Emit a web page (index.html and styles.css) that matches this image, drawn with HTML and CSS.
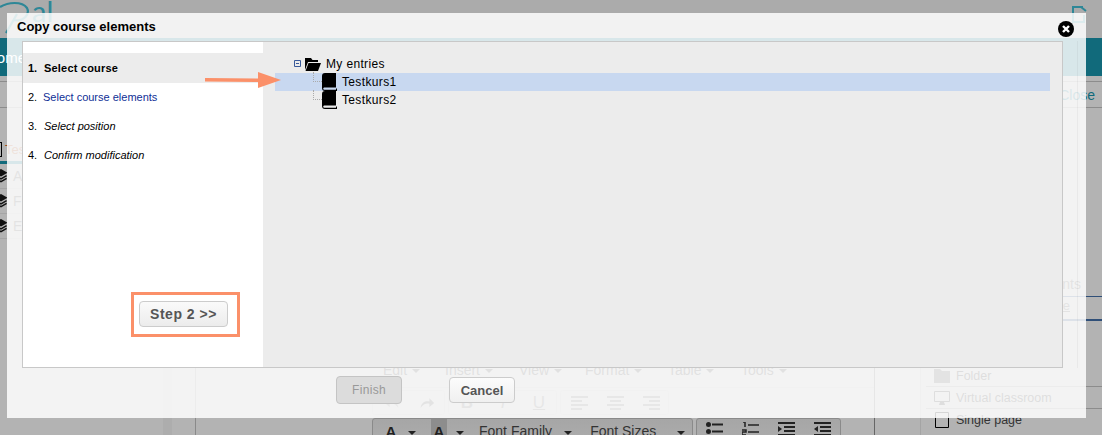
FILE: index.html
```html
<!DOCTYPE html>
<html lang="en">
<head>
<meta charset="utf-8">
<title>Copy course elements</title>
<link rel="stylesheet" href="styles.css">
</head>
<body>
<svg class="defs" width="0" height="0">
  <symbol id="stack" viewBox="0 0 14 16"><path d="M7 0 L14 4 L7 8 L0 4Z" fill="#111"/><path d="M1 7 L7 10.500 L13 7 M1 10 L7 13.500 L13 10" fill="none" stroke="#111" stroke-width="1.600"/></symbol>
  <symbol id="book" viewBox="0 0 15 18"><path d="M3 0 H14 V14.500 H3 C1.800 14.500 1.200 15 1.200 15.700 C1.200 16.400 1.800 16.800 3 16.800 H14 V15.500 H15 V18 H3 C1 18 0 17 0 15 V3 C0 1 1 0 3 0Z" fill="#000"/></symbol>
</svg>
<div class="page">
  <header class="top">
    <div class="logo">
      <svg class="swoosh" width="30" height="36" viewBox="0 0 30 36"><path d="M0 6 C8 1 22 0 27 7 C30 13 24 21 14 19 M17 13 L6 32" fill="none" stroke="#2e8797" stroke-width="2.200"/></svg>
      <span class="logo-text">al</span>
    </div>
    <svg class="top-icon" width="15" height="17" viewBox="0 0 15 17"><path d="M11 1 H1 V16 H12 V9 M9 1 L14 5" fill="none" stroke="#2e8797" stroke-width="2"/></svg>
  </header>
  <nav class="nav"><span class="nav-item">Home</span></nav>
  <div class="sub">
    <span class="close-link">Close</span>
  </div>
  <div class="content">
    <aside class="side">
      <div class="tab"><span class="tab-box"></span><span class="tab-text">Test</span></div>
      <div class="tab-rule"></div>
      <div class="side-row"><svg class="stack"><use href="#stack"/></svg><span>A</span></div>
      <div class="side-row"><svg class="stack"><use href="#stack"/></svg><span>F</span></div>
      <div class="side-row"><svg class="stack"><use href="#stack"/></svg><span>E</span></div>
    </aside>
    <main class="editor">
      <div class="menu">
        <span class="m m1">Edit</span><span class="m m2">Insert</span><span class="m m3">View</span><span class="m m4">Format</span><span class="m m5">Table</span><span class="m m6">Tools</span>
      </div>
      <div class="tools">
        <span class="group g1">
          <svg class="hist" width="16" height="14" viewBox="0 0 20 16"><path d="M18 14 C17 7 12 5 7 6 L7 2 L1 8 L7 13 L7 9 C11 8 15 10 18 14Z" fill="#777"/></svg>
          <svg class="hist" width="16" height="14" viewBox="0 0 20 16"><path d="M2 14 C3 7 8 5 13 6 L13 2 L19 8 L13 13 L13 9 C9 8 5 10 2 14Z" fill="#555"/></svg>
        </span>
        <span class="group g2"><b class="fmt">B</b><i class="fmt">I</i><u class="fmt">U</u></span>
        <span class="group g3">
          <svg width="17" height="14" viewBox="0 0 17 14"><path d="M0 1 H17 M0 5 H11 M0 9 H17 M0 13 H11" stroke="#555" stroke-width="1.500"/></svg>
          <svg width="17" height="14" viewBox="0 0 17 14"><path d="M0 1 H17 M3 5 H14 M0 9 H17 M3 13 H14" stroke="#555" stroke-width="1.500"/></svg>
          <svg width="17" height="14" viewBox="0 0 17 14"><path d="M0 1 H17 M6 5 H17 M0 9 H17 M6 13 H17" stroke="#555" stroke-width="1.500"/></svg>
        </span>
      </div>
      <div class="tools2">
        <span class="group2 g4">
          <span class="a a1">A</span><span class="car c1"></span>
          <span class="a hl">A</span><span class="car c2"></span>
          <span class="sel s1">Font Family</span><span class="car c3"></span>
          <span class="sel s2">Font Sizes</span><span class="car c4"></span>
        </span>
        <span class="group2 g5">
          <svg width="17" height="14" viewBox="0 0 17 14"><circle cx="2.500" cy="2.500" r="2.500" fill="#222"/><circle cx="2.500" cy="9.500" r="2.500" fill="#222"/><path d="M6 2.500 H17 M6 9.500 H17" stroke="#222" stroke-width="2"/></svg>
          <svg width="17" height="14" viewBox="0 0 17 14"><path d="M1 0 H3 V5 M0 8 H4 V10 H0 V13 H4 M6 3 H17 M6 10 H17" fill="none" stroke="#222" stroke-width="1.500"/></svg>
          <svg width="17" height="14" viewBox="0 0 17 14"><path d="M0 1 H17 M6 5 H17 M6 9 H17 M0 13 H17" stroke="#222" stroke-width="2"/><path d="M0 4 L4 7 L0 10Z" fill="#222"/></svg>
          <svg width="17" height="14" viewBox="0 0 17 14"><path d="M0 1 H17 M6 5 H17 M6 9 H17 M0 13 H17" stroke="#222" stroke-width="2"/><path d="M4 4 L0 7 L4 10Z" fill="#222"/></svg>
        </span>
      </div>
    </main>
    <aside class="right">
      <div class="rt-head">Elements</div>
      <div class="rt-box"><span>Choose</span></div>
      <ul class="rt-list">
        <li><svg width="16" height="14" viewBox="0 0 16 14"><path d="M0 0 H6 L8 2 H16 V14 H0Z" fill="#555"/></svg>Folder</li>
        <li><svg width="16" height="14" viewBox="0 0 16 14"><path d="M.5.5 H15.500 V10.500 H.5Z" fill="none" stroke="#333"/><path d="M5 14 L6 11 H10 L11 14Z" fill="#333"/></svg>Virtual classroom</li>
        <li><svg width="16" height="16" viewBox="0 0 16 16"><path d="M1.500.5 H14.500 V15.500 H1.500Z" fill="none" stroke="#000"/></svg>Single page</li>
      </ul>
    </aside>
  </div>
</div>

<div class="dialog">
  <div class="dialog-head">
    <h1 class="dialog-title">Copy course elements</h1>
    <span class="dialog-close"><svg width="16" height="16" viewBox="0 0 16 16"><circle cx="8" cy="8" r="8" fill="#000"/><path d="M5 5 L11 11 M11 5 L5 11" stroke="#fff" stroke-width="2.400"/></svg></span>
  </div>
  <div class="wizard">
    <div class="steps">
      <ol class="step-list">
        <li class="step current"><span class="no">1.</span>Select course</li>
        <li class="step next-step"><span class="no">2.</span>Select course elements</li>
        <li class="step later"><span class="no">3.</span>Select position</li>
        <li class="step later"><span class="no">4.</span>Confirm modification</li>
      </ol>
      <div class="mark"><button class="btn step-btn" type="button">Step 2 &gt;&gt;</button></div>
    </div>
    <div class="tree">
      <div class="tree-root">
        <svg class="toggle" width="7" height="7" viewBox="0 0 7 7"><path d="M.5.5 H6.500 V6.500 H.5Z" fill="none" stroke="#3a5a9a"/><path d="M2 3.500 H5" stroke="#3a5a9a"/></svg>
        <svg class="folder" width="16" height="14" viewBox="0 0 16 14"><path d="M0 1 H6 L7.500 3 H13 V5 H3 L0 13Z M3.500 6 H16 L13 14 H.5Z" fill="#000"/></svg>
        <span>My entries</span>
      </div>
      <div class="tree-row selected"><span class="elbow"></span><svg class="book"><use href="#book"/></svg><span>Testkurs1</span></div>
      <div class="tree-row"><span class="elbow"></span><svg class="book"><use href="#book"/></svg><span>Testkurs2</span></div>
    </div>
    <svg class="arrow" width="78" height="20" viewBox="0 0 78 20"><path d="M0 8 L53 8.500 L53 2 L76 10 L53 18 L53 12 L0 11.500Z" fill="#fb9069"/></svg>
  </div>
  <div class="dialog-foot">
    <button class="btn finish" type="button" disabled>Finish</button>
    <button class="btn cancel" type="button">Cancel</button>
  </div>
</div>
</body>
</html>
```

FILE: styles.css
```css
* { box-sizing: border-box; }
html, body { margin: 0; padding: 0; width: 1102px; height: 435px; overflow: hidden; }
body { background: #b3b3b3; font-family: "Liberation Sans", Arial, sans-serif; color: #222; position: relative; }
.defs { position: absolute; }

.page { height: 435px; display: flex; flex-direction: column; overflow: hidden; }
.top { height: 38px; background: #ababab; display: flex; justify-content: space-between; padding: 0 15px 0 0; flex: none; overflow: hidden; }
.logo { display: flex; align-items: flex-start; }
.swoosh { margin-top: 1px; flex: none; }
.logo-text { font: 400 29px/28px Lato, sans-serif; color: #2e8797; margin-left: 2px; margin-top: -3px; }
.top-icon { margin-top: 6px; }
.nav { height: 38px; background: #116a7b; flex: none; display: flex; align-items: center; }
.nav-item { color: #fff; font-size: 15px; margin-left: -14px; }
.sub { height: 27px; flex: none; border-top: 1px solid #8c8c8c; margin-top: 5px; border-bottom: 1px solid #8c8c8c; display: flex; justify-content: flex-end; align-items: center; padding-right: 7px; }
.close-link { color: #116a7b; font-size: 14px; }

.content { flex: 1; display: grid; grid-template-columns: 196px 679px 1fr; min-height: 0; }
.side { padding-top: 33px; border-right: 1px solid #8a8a8a; background: linear-gradient(90deg, transparent 163px, #adadad 163px, #adadad 172px, transparent 172px); }
.tab { display: flex; gap: 3px; align-items: center; height: 16px; }
.tab-box { width: 2px; height: 15px; border: 1px solid #000; border-left: 0; }
.tab-text { font-size: 13px; color: #9a4a20; }
.tab-rule { height: 3px; background: #116a7b; margin: 4px 0 0; }
.side-row { display: flex; align-items: center; gap: 5px; height: 25px; font-size: 14px; color: #555; border-bottom: 1px solid #a5a5a5; }
.stack { width: 14px; height: 15px; flex: none; margin-left: -6px; }

.editor { padding: 253px 0 0 176px; border-right: 1px solid #666; }
.menu { display: flex; height: 26px; padding-left: 11px; font-size: 14px; line-height: 19px; color: #444; }
.m { display: inline-flex; align-items: center; gap: 5px; height: 19px; }
.m::after { content: ""; border: 4px solid transparent; border-top-color: #444; border-bottom: 0; }
.m1 { width: 62px; }
.m2 { width: 74px; }
.m3 { width: 66px; }
.m4 { width: 83px; }
.m5 { width: 73px; }
.tools { display: flex; gap: 3px; height: 31px; padding-top: 2px; border-top: 1px solid #a8a8a8; }
.group { display: inline-flex; align-items: center; border: 1px solid #aaa; border-radius: 3px; height: 25px; }
.g1 { width: 73px; justify-content: space-around; padding-left: 2px; }
.g2, .g3 { width: 109px; display: inline-grid; grid-template-columns: repeat(3, 36px); justify-items: center; }
.fmt { font-size: 17px; color: #666; }
.tools2 { display: flex; gap: 3px; height: 30px; }
.group2 { display: flex; align-items: flex-start; background: linear-gradient(#a6a6a6, #b0b0b0); border: 1px solid #8a8a8a; border-radius: 3px 3px 0 0; height: 40px; color: #333; }
.g4 { width: 321px; padding-top: 4px; }
.g5 { width: 145px; gap: 19px; padding: 3px 0 0 9px; }
.a { font-weight: bold; font-size: 15px; width: 18px; text-align: center; color: #222; }
.a1 { margin-left: 9px; }
.hl { width: 16px; background: #8d8d8d; margin-left: 15px; margin-top: -4px; padding-top: 4px; height: 24px; }
.car { border: 4px solid transparent; border-top-color: #222; border-bottom: 0; margin-top: 8px; flex: none; }
.c1 { margin-left: 8px; }
.c2 { margin-left: 9px; }
.c3 { margin-left: 12px; }
.c4 { margin-left: 21px; }
.sel { font-size: 14px; color: #333; white-space: nowrap; }
.s1 { margin-left: 15px; }
.s2 { margin-left: 18px; }

.right { padding: 164px 0 0 51px; min-width: 0; background: linear-gradient(90deg, transparent 45px, #a4a4a4 45px, #a4a4a4 46px, transparent 46px) no-repeat 0 248px; }
.rt-head { height: 25px; text-align: right; padding: 4px 21px 0 0; font-size: 14px; color: #555; border-bottom: 1px solid #2f4f78; }
.rt-box { height: 24px; text-align: right; padding: 1px 32px 0 0; border-bottom: 2px solid #2f4f78; font-size: 13px; color: #555; text-decoration: underline; }
.rt-list { list-style: none; margin: 44px 0 0; padding: 0; font-size: 12.500px; color: #333; }
.rt-list li { height: 22px; display: flex; align-items: center; gap: 6px; padding-left: 8px; border-bottom: 1px solid #8c8c8c; }
.rt-list li:last-child { border-bottom: 0; }
.rt-list svg { flex: none; }

.dialog { position: absolute; left: 7px; top: 13px; width: 1079px; height: 405px; background: rgba(255,255,255,.84); display: flex; flex-direction: column; }
.dialog::after { content: ""; position: absolute; left: 1070px; top: 28px; width: 1px; height: 327px; background: rgba(0,0,0,.04); }
.dialog-head { height: 28px; padding-left: 10px; position: relative; flex: none; }
.dialog-title { margin: 0; font-size: 13px; line-height: 27px; font-weight: bold; color: #000; }
.dialog-close { position: absolute; left: 1051px; top: 8px; display: flex; }
.wizard { position: relative; margin-left: 15px; width: 1041px; height: 327px; flex: none; display: flex; border: 1px solid #c8c8c8; background: #ececec; }
.steps { width: 240px; flex: none; background: #fff; display: flex; flex-direction: column; justify-content: space-between; }
.step-list { list-style: none; margin: 11px 0 0; padding: 0; font-size: 11px; }
.step { height: 29px; display: flex; align-items: center; padding: 0 0 1px 5px; color: #000; }
.no { width: 16px; flex: none; color: #000; font-style: normal; }
.current { height: 30px; background: #ececec; font-weight: bold; letter-spacing: .2px; }
.current .no { letter-spacing: 0; }
.next-step { color: #0f2f96; }
.next-step .no { width: 15px; }
.later { font-style: italic; }
.mark { align-self: flex-end; border: 3px solid #fb9069; margin: 0 23px 30px 0; padding: 6px 9px 7px 5px; display: flex; }
.btn { font-family: "Liberation Sans", Arial, sans-serif; border-radius: 4px; padding: 0; }
.step-btn { width: 89px; height: 26px; font-size: 14px; letter-spacing: .5px; font-weight: bold; color: #555; border: 1px solid #ccc; background: linear-gradient(#fafafa, #ececec); }

.tree { flex: 1; padding: 12px 12px 0 12px; font-size: 12px; letter-spacing: .35px; color: #000; }
.tree-root { display: flex; align-items: center; height: 19px; padding-left: 19px; }
.toggle { margin-right: 4px; }
.folder { margin-right: 5px; }
.tree-row { height: 18px; position: relative; display: flex; align-items: center; padding-left: 47px; }
.selected { background: #c8d8f0; }
.book { width: 15px; height: 18px; margin-right: 5px; flex: none; }
.elbow { position: absolute; left: 38px; top: -1px; width: 9px; height: 10px; border-left: 1px dotted #aaa; border-bottom: 1px dotted #aaa; }
.arrow { position: absolute; left: 182px; top: 28px; }

.dialog-foot { flex: 1; display: flex; align-items: flex-start; padding: 8px 0 0 329px; gap: 47px; }
.finish { width: 66px; height: 28px; background: #dcdcdc; border: 1px solid #c4c4c4; color: #999; font-size: 12px; letter-spacing: .3px; }
.cancel { width: 66px; height: 26px; margin-top: 1px; background: linear-gradient(#fcfcfc, #f0f0f0); border: 1px solid #ccc; color: #555; font-size: 13px; font-weight: bold; }
```
